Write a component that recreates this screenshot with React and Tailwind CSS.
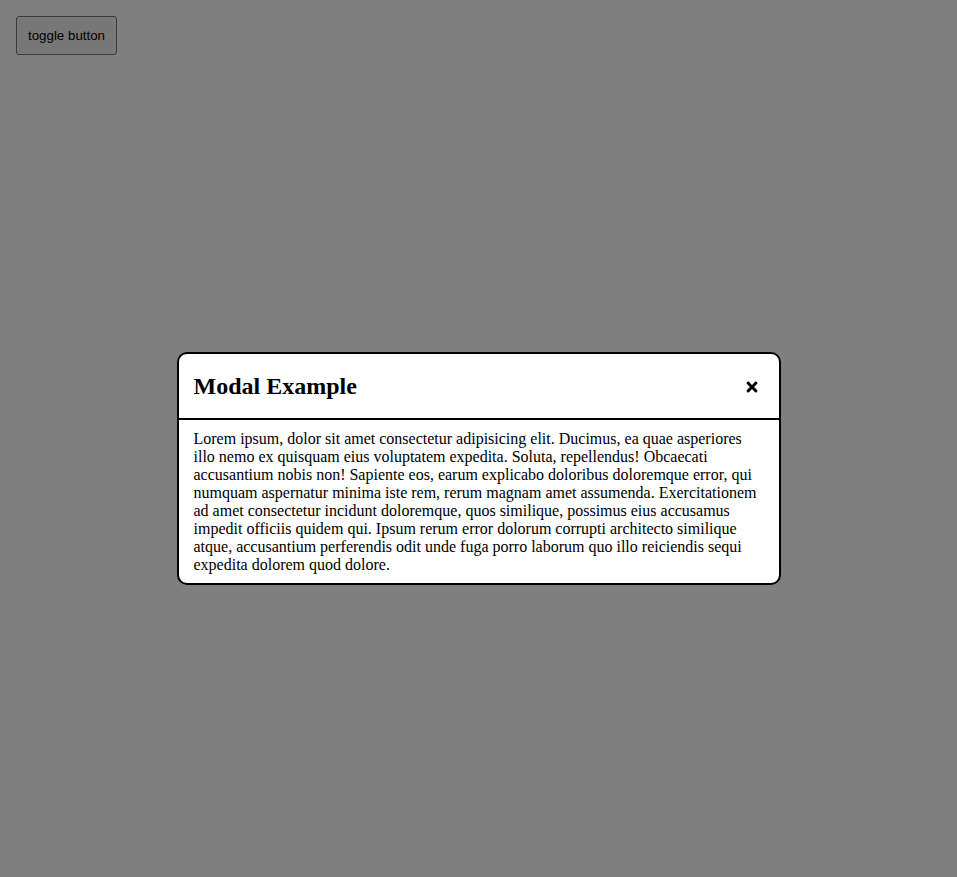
import React, { useState } from "react";
import { FaTimes } from "react-icons/fa";

const LOREM =
  "Lorem ipsum, dolor sit amet consectetur adipisicing elit. Ducimus, ea quae asperiores illo nemo ex quisquam eius voluptatem expedita. Soluta, repellendus! Obcaecati accusantium nobis non! Sapiente eos, earum explicabo doloribus doloremque error, qui numquam aspernatur minima iste rem, rerum magnam amet assumenda. Exercitationem ad amet consectetur incidunt doloremque, quos similique, possimus eius accusamus impedit officiis quidem qui. Ipsum rerum error dolorum corrupti architecto similique atque, accusantium perferendis odit unde fuga porro laborum quo illo reiciendis sequi expedita dolorem quod dolore.";

function Modal({ onClose }) {
  return (
    <div className="fixed inset-0 bg-black/50 flex items-center justify-center pt-[60px]">
      <div className="w-[604px] bg-white border-2 border-black rounded-[10px] font-['Liberation_Serif',serif] leading-[normal] text-black">
        {/* header */}
        <div className="h-[66px] flex items-center justify-between pl-[15px] pr-[21px] border-b-2 border-black">
          <h2 className="text-[24px] font-bold">Modal Example</h2>
          <button onClick={onClose} className="cursor-pointer mt-[2px]">
            <FaTimes className="w-[12px] h-[16px]" />
          </button>
        </div>
        {/* body */}
        <div className="px-[15px] pt-[10px] pb-[9px] text-[16px] leading-[18px]">
          <p>{LOREM}</p>
        </div>
      </div>
    </div>
  );
}

export default function App() {
  const [open, setOpen] = useState(true);

  return (
    <div className="min-h-screen bg-white p-4">
      <button
        onClick={() => setOpen(!open)}
        className="w-[101px] h-[39px] bg-[#efefef] border border-[#767676] rounded-[3px] text-[13.33px] text-black font-['Liberation_Sans',Arial,sans-serif]"
      >
        toggle button
      </button>
      {open && <Modal onClose={() => setOpen(false)} />}
    </div>
  );
}
